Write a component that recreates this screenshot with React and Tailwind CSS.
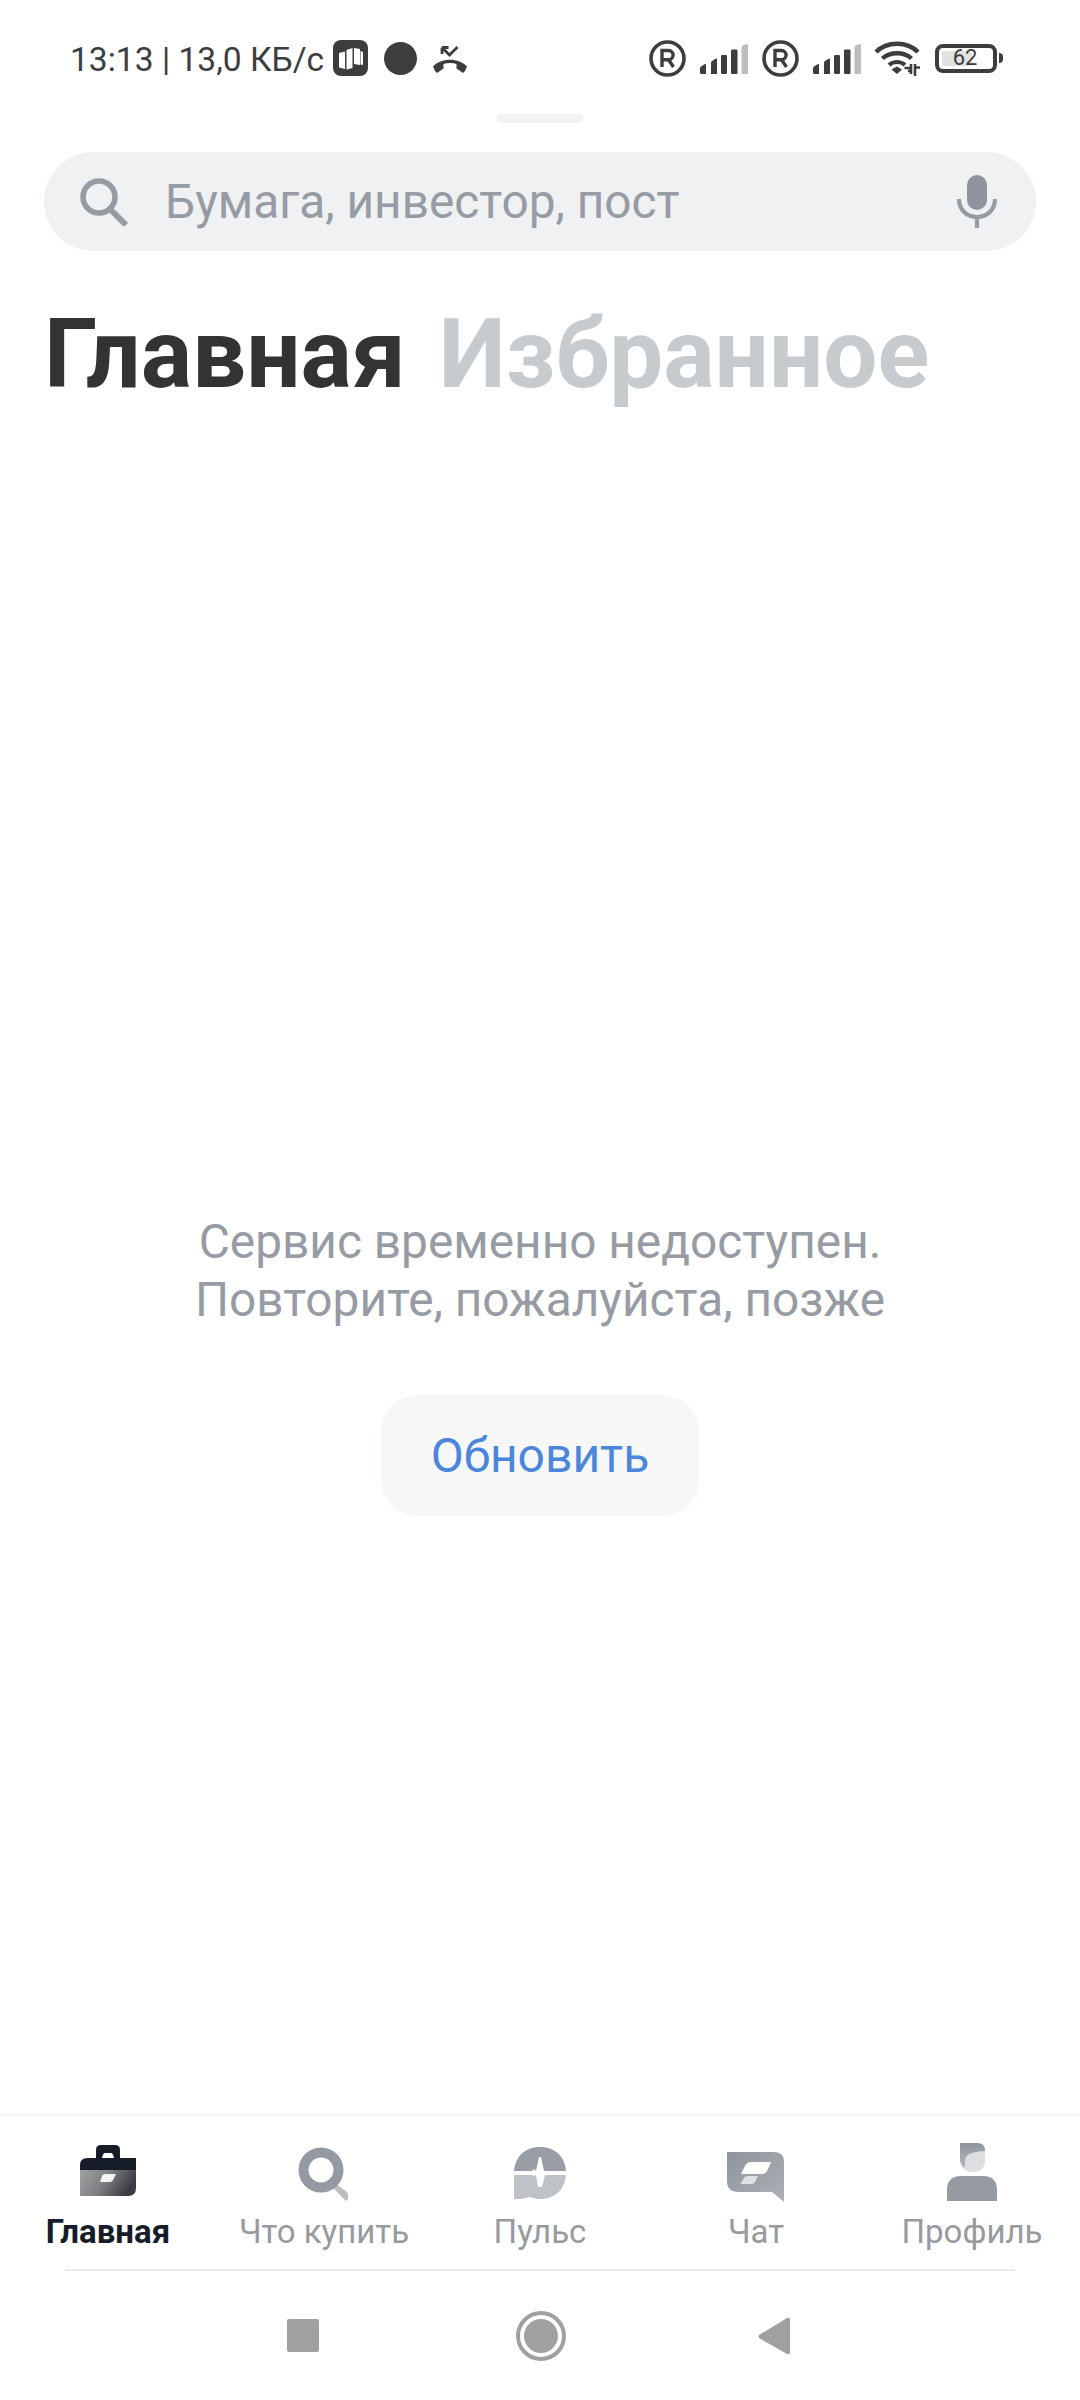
import React from "react";

const tabs = [
  { label: "Главная", icon: <BriefcaseIcon />, active: true },
  { label: "Что купить", icon: <SearchNavIcon /> },
  { label: "Пульс", icon: <PulseIcon /> },
  { label: "Чат", icon: <ChatIcon /> },
  { label: "Профиль", icon: <ProfileIcon /> },
];

function RoamingIcon() {
  return (
    <svg width="37" height="37" viewBox="0 0 37 37" fill="none">
      <circle cx="18.5" cy="18.5" r="16.5" stroke="#3d3d3f" strokeWidth="3.6" />
      <path d="M13 27V10.5h6.5a4.6 4.6 0 0 1 0 9.2H13M19.5 19.7 24.5 27" stroke="#3d3d3f" strokeWidth="3.4" />
    </svg>
  );
}

function SignalIcon() {
  return (
    <svg width="48" height="30" viewBox="0 0 48 30">
      <path d="M0 24.5q0-1.5 1.3-2.2L5 20q1-.5 1 1v9H1.5Q0 30 0 28.5Z" fill="#3d3d3f" />
      <path d="M11 19q0-1.300 1-2l4-2.500q1-.5 1 1V30h-6Z" fill="#3d3d3f" />
      <rect x="21" y="11" width="6" height="19" rx="1.2" fill="#3d3d3f" />
      <rect x="31" y="5.500" width="6.500" height="24.500" rx="1.200" fill="#3d3d3f" />
      <path d="M41.500 3q0-1 1-1.500L47 0q1 0 1 1v29h-6.500Z" fill="#bdbdbd" />
    </svg>
  );
}

function WifiIcon() {
  return (
    <svg width="46" height="36" viewBox="0 0 46 36" fill="none">
      <path d="M2 12C13 1 33 1 44 12" stroke="#3d3d3f" strokeWidth="4.400" />
      <path d="M8.500 18.500C16 11.500 30 11.500 37.500 18.500" stroke="#3d3d3f" strokeWidth="4.400" />
      <path d="M15 25C19.500 21 26.500 21 31 25" stroke="#3d3d3f" strokeWidth="4.200" />
      <path d="M17.500 29.500 23 26.500l5 3-5 4.500Z" fill="#3d3d3f" />
      <path d="M37 24v10M34 31h3M30.500 28h6M41 24v12M41 27.500h5" stroke="#3d3d3f" strokeWidth="2.600" />
    </svg>
  );
}

function AppIcon() {
  return (
    <svg width="35" height="36" viewBox="0 0 35 36">
      <rect width="35" height="36" rx="8" fill="#3d3d3f" />
      <path d="M6 13l6-1.500V29l-6-1.500ZM13.500 10l6-2v20l-6 1.500ZM21 8l6 1v16l-6-1ZM27.500 11 30 12v13l-2.500-.5Z" fill="#fff" />
    </svg>
  );
}

function MissedCallIcon() {
  return (
    <svg width="36" height="27" viewBox="0 0 36 27" fill="none">
      <path d="M1 20.500C9 11.500 27 11.500 35 20.500l-2 4.500-2 2-6.500-4.500v-4.500c-4-1.500-9-1.500-13 0v4.500L5 27l-2-2Z" fill="#3d3d3f" />
      <path d="M10 1.500h6.500M10 1.500V8M10.500 2l7 7 8-8" stroke="#3d3d3f" strokeWidth="2.800" />
    </svg>
  );
}

function SearchIcon() {
  return (
    <svg width="48" height="48" viewBox="0 0 48 48" fill="none">
      <circle cx="19" cy="19" r="16" stroke="#979ba3" strokeWidth="5.600" />
      <path d="M30 31 46 47" stroke="#979ba3" strokeWidth="6" />
    </svg>
  );
}

function MicIcon() {
  return (
    <svg width="40" height="53" viewBox="0 0 40 53" fill="none">
      <rect x="10" y="0" width="20" height="35" rx="10" fill="#8f949c" />
      <path d="M2 24c0 11 8 18 18 18s18-7 18-18M20 42v11" stroke="#979ba3" strokeWidth="4.200" />
    </svg>
  );
}

function BriefcaseIcon() {
  return (
    <svg width="64" height="64" viewBox="0 0 64 64">
      <defs>
        <linearGradient id="caseBody" x1="0" y1="0" x2="1" y2="0.300">
          <stop offset="0" stopColor="#a0a1a3" />
          <stop offset="0.500" stopColor="#808184" />
          <stop offset="1" stopColor="#3b3d43" />
        </linearGradient>
      </defs>
      <path d="M20 18v-8q0-5 5-5h14q5 0 5 5v8h-6q-1-5-3-5H29q-2 0-3 5Z" fill="#161c28" />
      <path d="M4 30V25q0-7 8-7h48v12Z" fill="#161c28" />
      <path d="M4 30h56v18q0 8-8 8H4Z" fill="url(#caseBody)" />
      <path d="M26 36q1-2 3-2h11l-3 6q-1 2-3 2H24Z" fill="#f2f3f4" />
    </svg>
  );
}

function SearchNavIcon() {
  return (
    <svg width="64" height="64" viewBox="0 0 64 64" fill="none">
      <path d="M43 43 55 52q2 3 1 7l-2 2-14-14Z" fill="#bbbec3" />
      <circle cx="29" cy="30" r="17.500" stroke="#959aa2" strokeWidth="10" />
    </svg>
  );
}

function PulseIcon() {
  return (
    <svg width="64" height="64" viewBox="0 0 64 64">
      <path d="M6 33C6 17 17 7 32 7s26 10 26 26Z" fill="#999ea6" />
      <path d="M6 33h52C58 49 47 59 32 59c-4 0-7-1-10-2l-9 2H6Z" fill="#bfc2c6" />
      <path d="M6 31h18l2-2 2 2 3-14h2l3 14h22v4H37l-3 12h-4l-2-12-2 1-2-1H6Z" fill="#fff" />
    </svg>
  );
}

function ChatIcon() {
  return (
    <svg width="64" height="64" viewBox="0 0 64 64">
      <defs>
        <linearGradient id="chatBody" x1="0" y1="0" x2="1" y2="1">
          <stop offset="0" stopColor="#8f939c" />
          <stop offset="1" stopColor="#aeb1b6" />
        </linearGradient>
      </defs>
      <path d="M3 12h47q10 0 10 10v40L48 52H15Q3 52 3 41Z" fill="url(#chatBody)" />
      <path d="M21 26q2-4 6-4h20l-3 7q-2 5-6 5H17Z" fill="#fff" />
      <path d="M19 40q1-4 5-4h10l-2 4q-1 4-5 4H16Z" fill="#dfe1e3" />
    </svg>
  );
}

function ProfileIcon() {
  return (
    <svg width="64" height="64" viewBox="0 0 64 64">
      <defs>
        <linearGradient id="hair" x1="0" y1="0" x2="0" y2="1">
          <stop offset="0" stopColor="#8f939c" />
          <stop offset="1" stopColor="#b8bbc0" />
        </linearGradient>
      </defs>
      <path d="M20 3h17q8 0 8 8v9q0 12-12 12t-13-12Z" fill="#dcdee0" />
      <path d="M20 3h17q8 0 8 8-7 0-13 2-7 2-7 8v7q-5-3-5-9Z" fill="url(#hair)" />
      <path d="M7 61V50q0-14 14-14h22q14 0 14 14v11Z" fill="#969aa2" />
    </svg>
  );
}

function StatusBar() {
  return (
    <div className="flex h-[114px] items-center pl-[70px] pr-[77px] pt-[2px] text-[33.6px] text-[#3d3d3f]">
      <span className="mt-[4px] leading-none">13:13 | 13,0 КБ/с</span>
      <div className="ml-[9px] flex items-center">
        <AppIcon />
      </div>
      <div className="ml-[16px] h-[33px] w-[33px] rounded-full bg-[#3d3d3f]" />
      <div className="ml-[15px] mt-[3px] flex">
        <MissedCallIcon />
      </div>
      <div className="ml-auto flex items-center">
        <RoamingIcon />
        <div className="ml-[14px] mt-[2px] flex"><SignalIcon /></div>
        <div className="ml-[14px] flex"><RoamingIcon /></div>
        <div className="ml-[14px] mt-[2px] flex"><SignalIcon /></div>
        <div className="ml-[13px] flex"><WifiIcon /></div>
        <div className="ml-[15px] flex items-center">
          <div className="relative flex h-[29px] w-[62px] items-center justify-center rounded-[8px] border-[4px] border-[#3d3d3f] pr-[2px]">
            <div className="absolute left-[3px] top-[3px] h-[15px] w-[30px] rounded-[2px] bg-[#e2e2e2]" />
            <span className="relative text-[22px] leading-none">62</span>
          </div>
          <div className="ml-[2px] h-[10px] w-[4px] rounded-r-full bg-[#3d3d3f]" />
        </div>
      </div>
    </div>
  );
}

export default function App() {
  return (
    <div className="flex h-[2400px] w-[1080px] flex-col overflow-hidden bg-white font-[Roboto,sans-serif]">
      <StatusBar />

      <div className="mx-auto h-[9px] w-[88px] rounded-full bg-[#f1f2f3]" />

      <div className="mx-[44px] mt-[29px] flex h-[99px] items-center rounded-full bg-[#eff1f3] pl-[36px] pr-[39px]">
        <SearchIcon />
        <span className="ml-[37px] mt-[2px] flex-1 text-[47.8px] text-[#979ba3]">Бумага, инвестор, пост</span>
        <MicIcon />
      </div>

      <div className="mx-[44px] mt-[43px] flex gap-[33px] text-[96px] font-bold leading-[120px]">
        <span className="text-[#333333]">Главная</span>
        <span className="text-[#c8cbce]">Избранное</span>
      </div>

      <main className="flex flex-1 flex-col items-center pt-[799px]">
        <p className="text-center text-[47.8px] leading-[58px] text-[#979ba3]">
          Сервис временно недоступен.
          <br />
          Повторите, пожалуйста, позже
        </p>
        <button className="mt-[66px] h-[121px] w-[318px] rounded-[36px] bg-[#f6f8f8] text-[48px] text-[#4a86d9]">
          Обновить
        </button>
      </main>

      <nav className="grid h-[156px] grid-cols-5 border-t-[3px] border-[#f6f6f6] pt-[24px]">
        {tabs.map((tab) => (
          <div key={tab.label} className="flex flex-col items-center">
            {tab.icon}
            <span className={tab.active ? "mt-[6px] text-[33px] font-bold leading-[44px] text-[#161c28]" : "mt-[6px] text-[33px] leading-[44px] text-[#979a9f]"}>
              {tab.label}
            </span>
          </div>
        ))}
      </nav>

      <div className="mx-[65px] h-[2px] bg-[#ebebeb]" />

      <div className="flex h-[129px] items-center justify-center pr-[3px]">
        <div className="h-[33px] w-[32px] rounded-[2px] bg-[#a0a0a0]" />
        <div className="ml-[197px] flex h-[50px] w-[50px] items-center justify-center rounded-full border-[4px] border-[#a0a0a0]">
          <div className="h-[34px] w-[34px] rounded-full bg-[#a0a0a0]" />
        </div>
        <svg className="ml-[192px]" width="32" height="38" viewBox="0 0 32 38">
          <path d="M32 2v34q-1 2-3 1L1 21q-1-2 0-3L29 1q2-1 3 1Z" fill="#a0a0a0" />
        </svg>
      </div>
    </div>
  );
}
